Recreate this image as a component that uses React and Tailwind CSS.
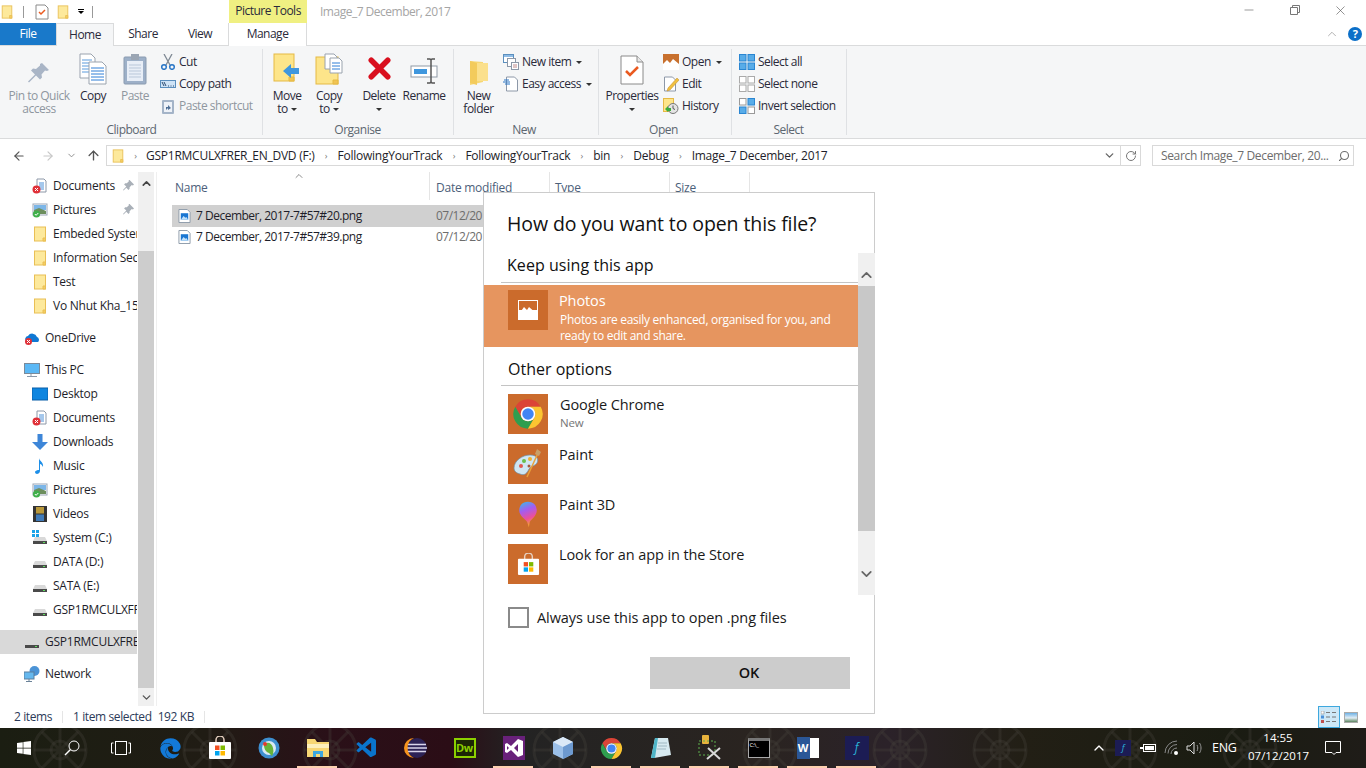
import { ArrowLeft, ArrowRight, ArrowUp, ChevronDown, ChevronUp, RotateCw, Search, Minus, X } from "lucide-react";
import { FaWindows, FaEdge } from "react-icons/fa";
import { VscVscode } from "react-icons/vsc";

function Folder({ className = "w-4 h-4" }) {
  return (
    <svg viewBox="0 0 16 16" className={className}>
      <rect x="2.500" y="1" width="11" height="14" fill="#fde99c" stroke="#e9bf55" />
      <path d="M11 15v-3h2.500v3z" fill="#f6cf62" stroke="#e9bf55" />
    </svg>
  );
}

function Drive() {
  return (
    <svg viewBox="0 0 16 16" className="w-4 h-4">
      <path d="M3 7h10l2 4H1z" fill="#d9d9d9" />
      <rect x="1" y="11" width="14" height="3" fill="#4a4a4a" />
      <rect x="11" y="12" width="2" height="1" fill="#5dde5d" />
    </svg>
  );
}

function Doc() {
  return (
    <svg viewBox="0 0 16 16" className="w-4 h-4">
      <path d="M5 1h7l2 2v11H5z" fill="#fff" stroke="#8d98a8" />
      <path d="M7 5h5M7 7h5M7 9h5M7 11h5" stroke="#4a90d9" />
      <circle cx="4.500" cy="11.500" r="4" fill="#e03038" />
      <path d="M3 10l3 3M6 10l-3 3" stroke="#fff" />
    </svg>
  );
}

function Pic() {
  return (
    <svg viewBox="0 0 16 16" className="w-4 h-4">
      <rect x="1" y="2" width="14" height="11" fill="#fff" stroke="#9aa5b5" />
      <rect x="2" y="3" width="12" height="5" fill="#7cb6e8" />
      <path d="M2 8l5-2 7 3v3H2z" fill="#6d8f5e" />
      <circle cx="4.500" cy="12" r="3.600" fill="#3fb04a" />
      <path d="M2.800 12l1.300 1.300L6.300 11" stroke="#fff" fill="none" />
    </svg>
  );
}

function Monitor({ className = "w-4 h-4" }) {
  return (
    <svg viewBox="0 0 16 16" className={className}>
      <rect x="0.500" y="1.500" width="15" height="10" fill="#5bb8f5" stroke="#7a8a9a" />
      <path d="M7 12v2M3 14.500h10" stroke="#8a98a8" />
    </svg>
  );
}

function NavItem({ icon, label, selected, deep = true }) {
  return (
    <div className={`h-6 flex items-center whitespace-nowrap overflow-hidden ${deep ? "pl-[32px]" : "pl-[24px]"} ${selected ? "bg-[#d9d9d9]" : ""}`}>
      <span className="w-4 h-4 mr-[5px] shrink-0">{icon}</span>
      <span>{label}</span>
    </div>
  );
}

function Pin() {
  return (
    <svg viewBox="0 0 10 10" className="w-[11px] h-[11px] absolute left-[123px] top-[6px]">
      <path d="M6 0l4 4-1 1-1-.5L6 6.500V8L5 9 3 7 .5 9.500 0 9l3-3-2-2 1-1h1.500L5.500 1 5 0z" fill="#a9b0b8" />
    </svg>
  );
}

function PinBig() {
  return (
    <svg viewBox="0 0 24 24" className="w-6 h-6">
      <path d="M15 2l7 7-2 1-2-.5-3.500 4 .5 3-2 2-4-4-7 7-1-1 7-7-4-4 2-2 3 .5 4-3.500L13 3z" fill="#a9b5c6" />
    </svg>
  );
}

function CopyBig() {
  return (
    <svg viewBox="0 0 28 32" className="w-7 h-8">
      <path d="M1 1h11l4 4v20H1z" fill="#fff" stroke="#9aa3ae" />
      <path d="M3 7h10M3 10h10M3 13h10M3 16h10M3 19h10" stroke="#5a9bdc" />
      <path d="M10 9h13l4 4v18H10z" fill="#fff" stroke="#9aa3ae" />
      <path d="M12 15h13M12 18h13M12 21h13M12 24h13M12 27h13" stroke="#2f7fd6" />
    </svg>
  );
}

function PasteBig() {
  return (
    <svg viewBox="0 0 24 32" className="w-6 h-8">
      <rect x="1" y="4" width="22" height="27" rx="1" fill="#9db0c8" stroke="#8a9bb0" />
      <rect x="4" y="8" width="16" height="20" fill="#e8eef7" />
      <path d="M6 12h12M6 15h12M6 18h12M6 21h12M6 24h12" stroke="#b9c7d9" />
      <rect x="8" y="1" width="8" height="6" fill="#9aa5b3" />
    </svg>
  );
}

function MoveBig() {
  return (
    <svg viewBox="0 0 28 32" className="w-7 h-8">
      <rect x="1" y="1" width="20" height="27" fill="#fde58a" stroke="#e5b945" />
      <path d="M16 28v-4h5v4z" fill="#f1c453" stroke="#e5b945" />
      <path d="M26 15H18v-4l-8 7 8 7v-4h8z" fill="#3f97de" />
    </svg>
  );
}

function CopyToBig() {
  return (
    <svg viewBox="0 0 28 32" className="w-7 h-8">
      <rect x="1" y="4" width="22" height="27" fill="#fde58a" stroke="#e5b945" />
      <path d="M18 31v-4h5v4z" fill="#f1c453" stroke="#e5b945" />
      <path d="M10 1h9l3 3v12H10z" fill="#fff" stroke="#9aa3ae" />
      <path d="M15 5h9l3 3v12H15z" fill="#fff" stroke="#9aa3ae" />
      <path d="M17 10h8M17 13h8M17 16h8" stroke="#2f7fd6" />
    </svg>
  );
}

function RenameBig() {
  return (
    <svg viewBox="0 0 28 28" className="w-7 h-7">
      <rect x="1" y="9" width="26" height="11" fill="#fff" stroke="#8f99a6" />
      <rect x="4" y="12" width="13" height="5" fill="#3f97de" />
      <path d="M17 2h3l1 1 1-1h3M21 3v22M17 26h3l1-1 1 1h3" stroke="#555" strokeWidth="1.500" fill="none" />
    </svg>
  );
}

function PropsBig() {
  return (
    <svg viewBox="0 0 24 30" className="w-6 h-[30px]">
      <path d="M1 1h16l6 6v22H1z" fill="#fff" stroke="#8a8a8a" />
      <path d="M17 1v6h6" fill="#e8e8e8" stroke="#8a8a8a" />
      <path d="M6 16l4 4 8-8" fill="none" stroke="#ea5a20" strokeWidth="2.500" />
    </svg>
  );
}

function NewFolderBig() {
  return (
    <svg viewBox="0 0 20 24" className="w-5 h-6">
      <path d="M1 0l13 1v20l-13 3z" fill="#f7d774" />
      <path d="M5 2h14v18H5z" fill="#fbe08c" />
      <path d="M1 0l7 2v22l-7-2z" fill="#f3cb5c" />
    </svg>
  );
}

function Small({ name }) {
  const common = { viewBox: "0 0 16 16", className: "w-4 h-4" };
  if (name === "cut")
    return (
      <svg {...common}>
        <path d="M4 0l6 11M12 0L6 11" stroke="#7f8994" strokeWidth="1.300" />
        <circle cx="4" cy="13" r="2.300" fill="none" stroke="#2a76c6" strokeWidth="1.500" />
        <circle cx="12" cy="13" r="2.300" fill="none" stroke="#2a76c6" strokeWidth="1.500" />
      </svg>
    );
  if (name === "path")
    return (
      <svg {...common}>
        <rect x="0.500" y="4.500" width="15" height="7" fill="#cfe4f7" stroke="#5b8fbe" />
        <path d="M2 6l2 4M4 6l2 4M8 10h1M10.500 10h1M13 10h1" stroke="#2b4b70" />
      </svg>
    );
  if (name === "shortcut")
    return (
      <svg {...common}>
        <rect x="2" y="2" width="12" height="14" rx="1" fill="#a4b4c8" />
        <rect x="4" y="4" width="8" height="10" fill="#eef2f8" />
        <path d="M6 12V9h2V7l3 3-3 2v-2" fill="#4f6f96" />
      </svg>
    );
  if (name === "newitem")
    return (
      <svg {...common}>
        <rect x="0.500" y="0.500" width="10" height="8" fill="#fff" stroke="#5b8fbe" />
        <rect x="1" y="1" width="9" height="2" fill="#8fbce6" />
        <rect x="4.500" y="4.500" width="8" height="8" fill="#fff" stroke="#8d98a8" />
        <rect x="8.500" y="8.500" width="7" height="7" fill="#fff" stroke="#8d98a8" />
        <path d="M10 11h4M10 13h4" stroke="#c08a8a" />
      </svg>
    );
  if (name === "easy")
    return (
      <svg {...common}>
        <path d="M3.500 1h8l3 3v11h-11z" fill="#fff" stroke="#8d98a8" />
        <path d="M1 4h5M0 6h7M2 8h5" stroke="#2a76c6" />
      </svg>
    );
  if (name === "open")
    return (
      <svg {...common}>
        <rect width="16" height="16" fill="#c8702e" />
        <path d="M0 16V10l4-4 3 3 3-4 6 5v6z" fill="#fff" />
      </svg>
    );
  if (name === "edit")
    return (
      <svg {...common}>
        <path d="M1.500 1h8l3 3v11h-11z" fill="#fff" stroke="#8d98a8" />
        <path d="M14 2l2 2-9 10-3 1 1-3z" fill="#f0c040" stroke="#c08a2a" strokeWidth="0.500" />
      </svg>
    );
  if (name === "history")
    return (
      <svg {...common}>
        <rect x="0.500" y="0.500" width="10" height="13" fill="#fde58a" stroke="#e5b945" />
        <circle cx="10" cy="10.500" r="5" fill="#e4e4e4" stroke="#777" />
        <path d="M10 7.500v3l2 1" stroke="#555" fill="none" />
        <path d="M2 11l3-3v2h3v3H5v1z" fill="#3cab3c" />
      </svg>
    );
  const on = "#58ace8";
  const off = "#fff";
  const cells = {
    all: [on, on, on, on],
    none: [off, off, off, off],
    invert: [off, on, on, off],
  }[name];
  const line = { all: "#2a86d2", none: "#aaa", invert: "#999" }[name];
  return (
    <svg {...common}>
      <rect x="0.500" y="0.500" width="6.500" height="6.500" fill={cells[0]} stroke={line} />
      <rect x="9" y="0.500" width="6.500" height="6.500" fill={cells[1]} stroke={cells[1] === on ? "#2a86d2" : line} />
      <rect x="0.500" y="9" width="6.500" height="6.500" fill={cells[2]} stroke={cells[2] === on ? "#2a86d2" : line} />
      <rect x="9" y="9" width="6.500" height="6.500" fill={cells[3]} stroke={line} />
    </svg>
  );
}

function Caret({ className = "" }) {
  return <span className={`inline-block w-0 h-0 border-x-[3px] border-x-transparent border-t-[3px] border-t-[#333] ${className}`} />;
}

function BigBtn({ icon, lines, caret, w, muted, ml }) {
  return (
    <div className={`${w} ${ml || ""} flex flex-col items-center shrink-0 ${muted ? "text-[#8f979f]" : "text-[#2a2a3a]"}`}>
      <div className="h-[34px] mb-[4px] flex items-end justify-center">{icon}</div>
      {lines.map((l, i) => (
        <div key={i} className="h-[13px] leading-[13px] whitespace-nowrap">
          {l}
          {caret && lines.length > 1 && i === lines.length - 1 && <Caret className="ml-[3px] mb-[2px]" />}
        </div>
      ))}
      {caret && lines.length === 1 && <div className="h-[13px] leading-[13px]"><Caret className="mb-[2px]" /></div>}
    </div>
  );
}

function SmallBtn({ icon, label, caret, muted }) {
  return (
    <div className={`h-[22px] flex items-center whitespace-nowrap ${muted ? "text-[#8f979f]" : "text-[#2a2a3a]"}`}>
      <span className="w-4 h-4 mr-[3px]">{icon}</span>
      {label}
      {caret && <Caret className="ml-[5px]" />}
    </div>
  );
}

function Group({ w, label, children, labelPad = "" }) {
  return (
    <div className={`${w} shrink-0 relative flex flex-col`}>
      <div className="flex h-[70px] pt-[5px]">{children}</div>
      <div className={`h-[16px] leading-[16px] text-center text-[#5c6670] mt-[6px] ${labelPad}`}>{label}</div>
      <div className="absolute right-0 top-[3px] bottom-[3px] w-px bg-[#dfe1e4]" />
    </div>
  );
}

function ChromeIcon({ className = "w-8 h-8" }) {
  return (
    <svg viewBox="0 0 24 24" className={className}>
      <path d="M12 1A11 11 0 0 1 21.530 6.500H12A5.500 5.500 0 0 0 7.240 14.750L2.470 6.500A11 11 0 0 1 12 1Z" fill="#db4437" />
      <path d="M2.470 6.500L7.240 14.750A5.500 5.500 0 0 0 16.760 14.750L12 23A11 11 0 0 1 2.470 6.500Z" fill="#2f9e4f" />
      <path d="M21.530 6.500H12A5.500 5.500 0 0 1 16.760 14.750L12 23A11 11 0 0 0 21.530 6.500Z" fill="#fbc531" />
      <circle cx="12" cy="12" r="5.500" fill="#fff" />
      <circle cx="12" cy="12" r="4.300" fill="#4285f4" />
    </svg>
  );
}

function StoreIcon({ className = "w-7 h-7" }) {
  return (
    <svg viewBox="0 0 24 24" className={className}>
      <path d="M8 7V4a4 4 0 0 1 8 0v3" fill="none" stroke="#e6d0c0" strokeWidth="1.500" />
      <rect x="1" y="6" width="22" height="17" rx="1" fill="#fff" />
      <rect x="7" y="9.500" width="4.500" height="4.500" fill="#f25022" />
      <rect x="12.500" y="9.500" width="4.500" height="4.500" fill="#7fba00" />
      <rect x="7" y="15" width="4.500" height="4.500" fill="#00a4ef" />
      <rect x="12.500" y="15" width="4.500" height="4.500" fill="#ffb900" />
    </svg>
  );
}

function AppRow({ icon, name, sub }) {
  return (
    <div className="h-[40px] mb-[10px] pl-[24px] flex">
      <div className="w-10 h-10 bg-[#cb6b2c] flex items-center justify-center shrink-0">{icon}</div>
      <div className={`${sub ? "ml-[12px]" : "ml-[11px]"} text-[14.500px] tracking-[-0.1px] leading-[20px] text-[#1a1a1a] pt-[1px]`}>
        <div>{name}</div>
        {sub && <div className="text-[11.500px] tracking-[-0.2px] leading-[16px] text-[#767676]">{sub}</div>}
      </div>
    </div>
  );
}

function Dialog() {
  return (
    <div className="absolute left-[483px] top-[192px] w-[392px] h-[522px] bg-white border border-[#cccccc] flex flex-col tracking-[-0.1px]">
      <div className="h-[60px] pl-[23px] pt-[18px] text-[19.500px] leading-[26px] text-[#111] shrink-0">How do you want to open this file?</div>
      <div className="h-[342px] flex shrink-0">
        <div className="w-[374px] shrink-0">
          <div className="h-[30px] ml-[17px] pl-[6px] text-[16px] tracking-[0.05px] leading-[24px] text-[#111] border-b border-[#c4c4c4]">Keep using this app</div>
          <div className="h-[62px] mt-[2px] bg-[#e6955f] pl-[24px] pt-[5px] flex">
            <div className="w-10 h-10 bg-[#cb6b2c] flex items-center justify-center shrink-0">
              <svg viewBox="0 0 20 20" className="w-5 h-5">
                <rect width="20" height="20" fill="#fff" />
                <rect x="1" y="1" width="18" height="9" fill="#cb6b2c" />
                <path d="M1 14l5-7 3 3 2-3 8 7v1H1z" fill="#fff" />
              </svg>
            </div>
            <div className="ml-[11px] text-white">
              <div className="text-[14.500px] leading-[18px] mt-[2px]">Photos</div>
              <div className="text-[12px] tracking-[-0.3px] leading-[16px] ml-[1px] mt-[2px]">Photos are easily enhanced, organised for you, and<br />ready to edit and share.</div>
            </div>
          </div>
          <div className="h-[39px] ml-[17px] pl-[7px] pt-[10px] text-[16px] tracking-[0px] leading-[24px] text-[#111] border-b border-[#c4c4c4]">Other options</div>
          <div className="pt-[8px]">
            <AppRow icon={<ChromeIcon className="w-8 h-8" />} name="Google Chrome" sub="New" />
            <AppRow
              name="Paint"
              icon={
                <svg viewBox="0 0 32 32" className="w-8 h-8">
                  <path d="M2 20c0-7 8-13 16-13 7 0 9 4 7 8-2 3-6 3-8 6-2 4-4 7-9 5-4-1-6-3-6-6z" fill="#cfe6f3" stroke="#6b91a8" strokeWidth="0.700" />
                  <circle cx="9" cy="18" r="2" fill="#e0574f" />
                  <circle cx="12" cy="13" r="2" fill="#6abf4b" />
                  <circle cx="18" cy="11" r="2" fill="#f0b232" />
                  <circle cx="17" cy="18" r="1.500" fill="#a5573d" />
                  <path d="M27 3L15 29" stroke="#e8a23c" strokeWidth="1.500" />
                  <path d="M25 1l4 3-2 4-4-2z" fill="#c8a06a" />
                </svg>
              }
            />
            <AppRow
              name="Paint 3D"
              icon={
                <svg viewBox="0 0 32 32" className="w-7 h-7">
                  <defs>
                    <linearGradient id="p3d" x1="0" y1="0" x2="0.300" y2="1">
                      <stop offset="0" stopColor="#2fc3e8" />
                      <stop offset="0.400" stopColor="#a45cf0" />
                      <stop offset="0.750" stopColor="#ee4f9a" />
                      <stop offset="1" stopColor="#f2a03a" />
                    </linearGradient>
                  </defs>
                  <path d="M16 2c7 0 10 5 10 10 0 6-6 10-8 13l-1 6-2-6C13 22 6 18 6 12 6 7 9 2 16 2z" fill="url(#p3d)" />
                </svg>
              }
            />
            <AppRow name="Look for an app in the Store" icon={<StoreIcon className="w-[23px] h-[23px]" />} />
          </div>
        </div>
        <div className="w-[17px] flex flex-col shrink-0 bg-[#f0f0f0]">
          <div className="h-[33px] flex items-center justify-center pt-[11px] text-[#666]"><ChevronUp size={18} strokeWidth={2.500} /></div>
          <div className="h-[245px] bg-[#c8c8c8]" />
          <div className="flex-1 flex items-end justify-center pb-[12px] text-[#666]"><ChevronDown size={18} strokeWidth={2.500} /></div>
        </div>
      </div>
      <div className="pl-[24px] pt-[12px] flex items-center text-[14.500px] tracking-[-0.07px] text-[#1a1a1a]">
        <div className="w-[21px] h-[21px] border-2 border-[#8a8a8a] mr-[8px]" />
        Always use this app to open .png files
      </div>
      <div className="ml-[166px] mt-[28px] w-[200px] h-[32px] bg-[#cccccc] flex items-center justify-center pr-[2px] text-[14.500px] font-semibold text-[#111]">OK</div>
    </div>
  );
}

function Task({ children, running, w = "w-[49px]" }) {
  return (
    <div className={`relative ${w} h-full flex items-center justify-center shrink-0`}>
      {children}
      {running && <div className="absolute bottom-0 left-[4px] w-[40px] h-[2px] bg-[#fdd0b0]" />}
    </div>
  );
}

function Wallpaper() {
  // faint flower pattern of the desktop picture behind the taskbar
  const spots = [60, 210, 330, 560, 770, 900, 1000, 1130, 1250];
  return (
    <svg viewBox="0 0 1366 40" className="absolute inset-0 w-full h-full" fill="none">
      {spots.map((x) => (
        <g key={x} stroke="#4a4640" strokeOpacity="0.300" strokeWidth="3">
          <circle cx={x} cy="22" r="26" />
          <circle cx={x} cy="22" r="9" />
          <path d={`M${x - 26} 22H${x + 26}M${x} -4V48M${x - 18} 4L${x + 18} 40M${x + 18} 4L${x - 18} 40`} />
        </g>
      ))}
    </svg>
  );
}

function Taskbar() {
  return (
    <div className="relative h-[40px] shrink-0 flex text-white overflow-hidden bg-[linear-gradient(90deg,#1b1e12_0%,#201c14_15%,#2a1018_24%,#2b0d16_33%,#232323_38%,#2a2420_55%,#2b2229_65%,#221f15_75%,#1a1c12_90%,#1f1c18_100%)]">
      <Wallpaper />
      <Task w="w-[48px]"><FaWindows size={16} /></Task>
      <Task w="w-[47px]">
        <svg viewBox="0 0 16 16" className="w-4 h-4" fill="none" stroke="#fff">
          <circle cx="10" cy="6" r="5" />
          <path d="M6.500 9.500L1 15" strokeWidth="1.500" />
        </svg>
      </Task>
      <Task w="w-[51px]">
        <svg viewBox="0 0 20 14" className="w-5 h-[14px]" fill="none" stroke="#fff">
          <rect x="4.500" y="0.500" width="11" height="13" />
          <path d="M2.500 2H.5v10h2M17.500 2h2v10h-2" />
        </svg>
      </Task>
      <Task><FaEdge size={21} color="#1379d8" /></Task>
      <Task><StoreIcon className="w-6 h-6" /></Task>
      <Task>
        <svg viewBox="0 0 22 22" className="w-[22px] h-[22px]">
          <circle cx="11" cy="11" r="10.500" fill="#3d8fd0" />
          <circle cx="11" cy="11" r="7" fill="#d9e9f2" />
          <path d="M6 8c3-4 8-2 9 3 1 4 0 6-1 8l-3-3C8 15 6 12 6 8z" fill="#66b43a" />
          <circle cx="7" cy="7" r="2" fill="#e23a2e" />
        </svg>
      </Task>
      <Task running>
        <svg viewBox="0 0 22 20" className="w-[22px] h-5">
          <path d="M0 1h8l2 3h12v15H0z" fill="#f7d774" />
          <rect x="0" y="6" width="22" height="4" fill="#fdf0bc" />
          <path d="M6 19v-6h10v6h-3v-3H9v3z" fill="#3ea7e0" />
        </svg>
      </Task>
      <Task><VscVscode size={24} color="#0a74cc" /></Task>
      <Task>
        <svg viewBox="0 0 24 24" className="w-6 h-6">
          <circle cx="13" cy="12" r="10" fill="#2c2255" />
          <path d="M3 12h20M4 8.500h18M4 15.500h18" stroke="#d9d5ea" strokeWidth="1.500" />
          <path d="M10 2A10 10 0 0 0 10 22 11 11 0 0 1 10 2z" fill="#f7941e" />
        </svg>
      </Task>
      <Task>
        <div className="w-[22px] h-[20px] border-2 border-[#8cd000] bg-[#1c2605] text-[#8cd000] text-[11px] leading-[16px] font-bold text-center">Dw</div>
      </Task>
      <Task running>
        <svg viewBox="0 0 22 24" className="w-[22px] h-6">
          <path d="M0 0h22v24H0z" fill="#68217a" />
          <path d="M15 3l5 2v14l-5 2-7-7-4 3-2-1V8l2-1 4 3zM15 8l-4 4 4 4zM4 10v4l2-2z" fill="#fff" />
        </svg>
      </Task>
      <Task>
        <svg viewBox="0 0 22 24" className="w-[22px] h-6">
          <path d="M11 1l10 5v12l-10 5-10-5V6z" fill="#9cc0e8" />
          <path d="M11 1l10 5-10 5L1 6z" fill="#dbe9f7" />
          <path d="M11 11l10-5v12l-10 5z" fill="#6d9ad0" />
        </svg>
      </Task>
      <Task running><ChromeIcon className="w-[23px] h-[23px]" /></Task>
      <Task running>
        <svg viewBox="0 0 22 22" className="w-[22px] h-[22px]">
          <path d="M5 1h13l3 17-17 3H1z" fill="#d7eaf0" />
          <path d="M5 1L1 21h4l3-20z" fill="#4fb5c7" />
          <path d="M8 6h9M8 9h9M7 12h9" stroke="#9fb8c2" />
        </svg>
      </Task>
      <Task running>
        <svg viewBox="0 0 24 26" className="w-6 h-[26px]">
          <rect x="4" y="0" width="7" height="9" rx="1" fill="#e8b33c" />
          <rect x="1" y="6" width="16" height="14" fill="none" stroke="#5fb04f" strokeDasharray="2 2" />
          <path d="M9 24l13-11M10 13l12 11" stroke="#d8d8d8" strokeWidth="2" />
        </svg>
      </Task>
      <Task running>
        <div className="w-[22px] h-[20px] bg-black border border-[#aaa] text-[6px] leading-[9px] pl-[1px] border-t-[3px] border-t-[#777]">C:\_</div>
      </Task>
      <Task running>
        <div className="relative w-[22px] h-[22px]">
          <div className="absolute right-0 top-[1px] w-[16px] h-[20px] bg-white" />
          <div className="absolute left-0 top-0 w-[13px] h-[22px] bg-[#2b5797] text-white text-[11px] font-bold leading-[22px] text-center">W</div>
        </div>
      </Task>
      <Task running>
        <div className="w-6 h-6 bg-[#1c1c54] text-[#2ab3d8] text-[12px] italic leading-[24px] text-center">f</div>
      </Task>

      <div className="relative ml-auto flex items-center">
        <ChevronUp size={16} className="mr-[8px]" />
        <div className="w-4 h-4 bg-[#1c1c54] text-[#2ab3d8] text-[9px] italic leading-[16px] text-center mr-[9px]">f</div>
        <svg viewBox="0 0 16 10" className="w-4 h-[10px] mr-[8px]">
          <rect x="3.500" y="1.500" width="12" height="7" fill="none" stroke="#fff" />
          <rect x="5" y="3" width="9" height="4" fill="#fff" />
          <path d="M0 5h3" stroke="#fff" strokeWidth="2" />
        </svg>
        <svg viewBox="0 0 16 16" className="w-4 h-4 mr-[6px]" fill="none" stroke="#8a8a8a">
          <path d="M1 13a12 12 0 0 1 12-12M4 13.500a9 9 0 0 1 9-9M7 14a6 6 0 0 1 6-6" />
          <circle cx="12" cy="13" r="2" fill="#fff" stroke="none" />
        </svg>
        <svg viewBox="0 0 16 16" className="w-4 h-4 mr-[10px]" fill="none" stroke="#ddd">
          <path d="M1 6h3l4-4v12l-4-4H1z" />
          <path d="M11 5c1 2 1 4 0 6M13.500 3c2 3 2 7 0 10" stroke="#999" />
        </svg>
        <div className="text-[12.500px] w-[25px] mr-[11px]">ENG</div>
        <div className="w-[60px] text-center text-[11.500px] tracking-normal leading-[18px] -mt-[2px] mr-[17px]">
          <div>14:55</div>
          <div>07/12/2017</div>
        </div>
        <svg viewBox="0 0 16 16" className="w-4 h-4 mr-[25px]" fill="none" stroke="#fff">
          <path d="M.5 1.500h15v11H11L9 14.500l-2-2H.5z" />
        </svg>
      </div>
    </div>
  );
}

export default function App() {
  return (
    <div className="relative w-[1366px] h-[768px] overflow-hidden bg-white flex flex-col text-[12px] tracking-[-0.25px] text-[#1e1e2a] font-['Open_Sans','Noto_Sans',sans-serif]">
      {/* title bar */}
      <div className="h-[23px] flex shrink-0 tracking-[-0.5px]">
        <div className="w-[229px] flex items-center">
          <Folder className="w-[14px] h-4" />
          <div className="w-px h-[12px] bg-[#999] ml-[9px]" />
          <svg viewBox="0 0 14 16" className="w-[14px] h-4 ml-[11px]">
            <path d="M1 1h9l3 3v11H1z" fill="#fff" stroke="#8a8a8a" />
            <path d="M4 8l2 2 4-4" fill="none" stroke="#ea5a20" strokeWidth="1.500" />
          </svg>
          <Folder className="w-[14px] h-4 ml-[7px]" />
          <div className="ml-[8px] flex flex-col items-center">
            <div className="w-[6px] h-px bg-black mb-[1px]" />
            <Caret className="border-t-black" />
          </div>
          <div className="w-px h-[12px] bg-[#999] ml-[8px]" />
        </div>
        <div className="w-[78px] bg-[#f0f082] text-center leading-[21px] text-[#2a2a3a]">Picture Tools</div>
        <div className="ml-[13px] leading-[24px] text-[#a5a5a5]">Image_7 December, 2017</div>
        <div className="ml-auto flex items-start text-[#555]">
          <Minus size={14} strokeWidth={1} className="mt-[3px] mr-[34px]" />
          <svg viewBox="0 0 10 10" className="w-[10px] h-[10px] mt-[5px] mr-[33px]" fill="none" stroke="#777">
            <path d="M.5 2.500h7v7h-7zM2.500 2.500v-2h7v7h-2" />
          </svg>
          <X size={15} strokeWidth={1} className="mt-[3px] mr-[18px]" />
        </div>
      </div>
      {/* tabs */}
      <div className="h-[23px] flex shrink-0 items-stretch border-b border-[#dadbdc] leading-[22px] text-[#2a2a3a] tracking-[-0.5px]">
        <div className="w-[56px] bg-[#1979ca] text-white text-center">File</div>
        <div className="w-[58px] h-[23px] bg-[#f5f6f7] border-x border-t border-[#dadbdc] text-center">Home</div>
        <div className="w-[58px] text-center">Share</div>
        <div className="w-[56px] text-center">View</div>
        <div className="w-[79px] h-[23px] border-x border-[#dadbdc] text-center bg-white">Manage</div>
        <div className="ml-auto flex items-center">
          <ChevronUp size={14} strokeWidth={1.300} className="text-[#999] mr-[9px]" />
          <div className="w-[14px] h-[14px] rounded-full bg-[#0b6fc8] text-white text-[11px] leading-[14px] font-bold text-center mr-[4px]">?</div>
        </div>
      </div>
      {/* ribbon */}
      <div className="h-[93px] bg-[#f5f6f7] border-b border-[#dadbdc] flex shrink-0 text-[#2a2a3a] tracking-[-0.5px]">
        <Group w="w-[263px]" label="Clipboard">
          <div className="w-[6px]" />
          <BigBtn w="w-[66px]" muted icon={<PinBig />} lines={["Pin to Quick", "access"]} />
          <BigBtn w="w-[42px]" icon={<CopyBig />} lines={["Copy"]} />
          <BigBtn w="w-[42px]" muted icon={<PasteBig />} lines={["Paste"]} />
          <div className="ml-[4px]">
            <SmallBtn icon={<Small name="cut" />} label="Cut" />
            <SmallBtn icon={<Small name="path" />} label="Copy path" />
            <SmallBtn muted icon={<Small name="shortcut" />} label="Paste shortcut" />
          </div>
        </Group>
        <Group w="w-[191px]" label="Organise" labelPad="pr-[2px]">
          <BigBtn w="w-[48px]" icon={<MoveBig />} lines={["Move", "to"]} caret />
          <BigBtn w="w-[36px]" icon={<CopyToBig />} lines={["Copy", "to"]} caret />
          <BigBtn w="w-[48px]" ml="ml-[8px]" icon={<X size={33} strokeWidth={4} color="#d90f1e" />} lines={["Delete"]} caret />
          <BigBtn w="w-[42px]" icon={<RenameBig />} lines={["Rename"]} />
        </Group>
        <Group w="w-[145px]" label="New" labelPad="pr-[5px]">
          <BigBtn w="w-[49px]" icon={<NewFolderBig />} lines={["New", "folder"]} />
          <div>
            <SmallBtn icon={<Small name="newitem" />} label="New item" caret />
            <SmallBtn icon={<Small name="easy" />} label="Easy access" caret />
          </div>
        </Group>
        <Group w="w-[133px]" label="Open" labelPad="pr-[4px]">
          <div className="w-[6px]" />
          <BigBtn w="w-[54px]" icon={<PropsBig />} lines={["Properties"]} caret />
          <div className="ml-[4px]">
            <SmallBtn icon={<Small name="open" />} label="Open" caret />
            <SmallBtn icon={<Small name="edit" />} label="Edit" />
            <SmallBtn icon={<Small name="history" />} label="History" />
          </div>
        </Group>
        <Group w="w-[115px]" label="Select" labelPad="pr-[2px]">
          <div className="ml-[7px]">
            <SmallBtn icon={<Small name="all" />} label="Select all" />
            <SmallBtn icon={<Small name="none" />} label="Select none" />
            <SmallBtn icon={<Small name="invert" />} label="Invert selection" />
          </div>
        </Group>
      </div>
      {/* address bar */}
      <div className="h-[33px] flex items-center shrink-0">
        <ArrowLeft size={14} className="ml-[12px] text-[#555]" />
        <ArrowRight size={14} className="ml-[15px] text-[#c8c8c8]" />
        <ChevronDown size={11} className="ml-[11px] text-[#888]" />
        <ArrowUp size={15} strokeWidth={2.200} className="ml-[9px] text-[#555]" />
        <div className="ml-[5px] w-[1035px] h-[21px] border border-[#d9d9d9] flex items-center whitespace-nowrap text-[#1e1e2a]">
          <Folder className="w-[14px] h-4 ml-[4px]" />
          {["GSP1RMCULXFRER_EN_DVD (F:)", "FollowingYourTrack", "FollowingYourTrack", "bin", "Debug", "Image_7 December, 2017"].map((p, i) => (
            <span key={i} className="flex items-center">
              <span className={`text-[#777] text-[9px] text-center ${i === 0 ? "w-[21px]" : "w-[23px]"}`}>&#x203A;</span>
              {p}
            </span>
          ))}
          <ChevronDown size={13} strokeWidth={2.500} className="ml-auto mr-[4px] text-[#666]" />
          <div className="w-[20px] h-full border-l border-[#d9d9d9] flex items-center justify-center text-[#777]">
            <RotateCw size={12} strokeWidth={2} />
          </div>
        </div>
        <div className="ml-[11px] w-[202px] h-[21px] border border-[#d9d9d9] flex items-center pl-[8px] tracking-[-0.35px] text-[#6d6d6d] whitespace-nowrap">
          Search Image_7 December, 20...
          <Search size={12} strokeWidth={2.200} className="ml-auto mr-[3px] -scale-x-100" />
        </div>
      </div>
      {/* main */}
      <div className="flex-1 min-h-0 flex">
        <div className="w-[137px] shrink-0 overflow-hidden pt-[2px]">
          <div className="relative">
            <NavItem icon={<Doc />} label="Documents" />
            <Pin />
          </div>
          <div className="relative">
            <NavItem icon={<Pic />} label="Pictures" />
            <Pin />
          </div>
          <NavItem icon={<Folder />} label="Embeded Systems" />
          <NavItem icon={<Folder />} label="Information Security" />
          <NavItem icon={<Folder />} label="Test" />
          <NavItem icon={<Folder />} label="Vo Nhut Kha_15520372" />
          <div className="h-2" />
          <NavItem
            deep={false}
            label="OneDrive"
            icon={
              <svg viewBox="0 0 16 16" className="w-4 h-4">
                <path d="M2 11a3 3 0 0 1 2-5 5 5 0 0 1 9 1 3 3 0 0 1 1 5H3z" fill="#0f78d4" />
                <circle cx="4.500" cy="11.500" r="3.500" fill="#e03038" />
                <path d="M3 10l3 3M6 10l-3 3" stroke="#fff" />
              </svg>
            }
          />
          <div className="h-2" />
          <NavItem deep={false} icon={<Monitor />} label="This PC" />
          <NavItem
            label="Desktop"
            icon={
              <svg viewBox="0 0 16 16" className="w-4 h-4">
                <rect y="2" width="16" height="12" fill="#0f86e0" stroke="#0a5ea8" />
              </svg>
            }
          />
          <NavItem icon={<Doc />} label="Documents" />
          <NavItem
            label="Downloads"
            icon={
              <svg viewBox="0 0 16 16" className="w-4 h-4">
                <path d="M5.500 0h5v8H16l-8 8-8-8h5.500z" fill="#3d86d8" />
              </svg>
            }
          />
          <NavItem
            label="Music"
            icon={
              <svg viewBox="0 0 16 16" className="w-4 h-4">
                <path d="M7 0c0 3 5 4 4 9-1-2-2-3-3-3v7c0 2-2 3-3 3s-2-1-2-2 2-2 3-2h1z" fill="#1e8fe8" />
              </svg>
            }
          />
          <NavItem icon={<Pic />} label="Pictures" />
          <NavItem
            label="Videos"
            icon={
              <svg viewBox="0 0 16 16" className="w-4 h-4">
                <rect x="1" width="14" height="16" fill="#333" />
                <rect x="4" y="1" width="8" height="6.500" fill="#b9983a" />
                <rect x="4" y="8.500" width="8" height="6.500" fill="#3f7ab8" />
              </svg>
            }
          />
          <NavItem
            label="System (C:)"
            icon={
              <div className="relative w-4 h-4">
                <Drive />
                <div className="absolute left-0 top-0 grid grid-cols-2 gap-px">
                  <div className="w-[3px] h-[3px] bg-[#19a3e8]" />
                  <div className="w-[3px] h-[3px] bg-[#19a3e8]" />
                  <div className="w-[3px] h-[3px] bg-[#19a3e8]" />
                  <div className="w-[3px] h-[3px] bg-[#19a3e8]" />
                </div>
              </div>
            }
          />
          <NavItem icon={<Drive />} label="DATA (D:)" />
          <NavItem icon={<Drive />} label="SATA (E:)" />
          <NavItem icon={<Drive />} label="GSP1RMCULXFRER_EN_DVD (F:)" />
          <div className="h-2" />
          <NavItem deep={false} selected icon={<Drive />} label="GSP1RMCULXFRER_EN_DVD (F:)" />
          <div className="h-2" />
          <NavItem
            deep={false}
            label="Network"
            icon={
              <svg viewBox="0 0 16 16" className="w-4 h-4">
                <circle cx="10.500" cy="5" r="5" fill="#4b93d6" />
                <rect x="0" y="6" width="10" height="7" fill="#65b8ee" stroke="#5a7f9e" />
                <path d="M5 13v2M2 15.500h6" stroke="#6b8298" />
              </svg>
            }
          />
        </div>
        <div className="w-[16px] ml-[1px] shrink-0 bg-[#f0f0f0] flex flex-col">
          <div className="h-[79px] pt-[5px] flex justify-center text-[#444]"><ChevronUp size={13} strokeWidth={3} /></div>
          <div className="flex-1 bg-[#cdcdcd]" />
          <div className="h-[18px] flex items-center justify-center text-[#555]"><ChevronDown size={13} strokeWidth={2.500} /></div>
        </div>
        <div className="flex-1 border-l border-[#efefef] ml-[2px]">
          <div className="h-[28px] flex items-stretch text-[#4c607a]">
            <div className="w-[273px] pl-[18px] pt-[7px] border-r border-[#e5e5e5] relative">
              Name
              <ChevronUp size={12} strokeWidth={1.500} className="absolute left-[136px] -top-[2px] text-[#666]" />
            </div>
            <div className="w-[120px] pl-[6px] pt-[7px] border-r border-[#e5e5e5]">Date modified</div>
            <div className="w-[120px] pl-[5px] pt-[7px] border-r border-[#e5e5e5]">Type</div>
            <div className="w-[80px] pl-[5px] pt-[7px] border-r border-[#e5e5e5]">Size</div>
          </div>
          <div className="pt-[5px] pl-[15px] w-[593px] tracking-[-0.5px]">
            {["7 December, 2017-7#57#20.png", "7 December, 2017-7#57#39.png"].map((f, i) => (
              <div key={f} className={`flex items-center pl-[6px] ${i === 0 ? "h-[22px] bg-[#d0d0d0]" : "h-[20px]"}`}>
                <svg viewBox="0 0 14 16" className="w-[13px] h-4">
                  <path d="M1 1h9l3 3v11H1z" fill="#fff" stroke="#8a98a8" />
                  <rect x="3" y="5" width="8" height="7" fill="#1976d2" />
                  <path d="M3 12l3-4 2 2 1-1 2 3z" fill="#bfe0fa" />
                </svg>
                <span className="ml-[5px] w-[240px] whitespace-nowrap">{f}</span>
                <span className="text-[#6d6d6d]">07/12/2017 07:57</span>
              </div>
            ))}
          </div>
        </div>
      </div>
      {/* status bar */}
      <div className="h-[22px] flex items-center shrink-0 text-[#2b3a58] tracking-[-0.4px]">
        <span className="ml-[14px]">2 items</span>
        <span className="ml-[10px] w-px h-[12px] bg-[#e5e5e5]" />
        <span className="ml-[10px]">1 item selected</span>
        <span className="ml-[6px]">192 KB</span>
        <span className="ml-[10px] w-px h-[12px] bg-[#e5e5e5]" />
        <div className="ml-auto flex items-center mr-[8px]">
          <div className="w-[22px] h-[22px] border border-[#3ea8de] bg-[#cde8f7] flex items-center justify-center">
            <svg viewBox="0 0 16 12" className="w-4 h-3">
              <rect x="0" y="0" width="3" height="3" fill="#fff" stroke="#777" strokeWidth="0.500" />
              <rect x="0" y="4.500" width="3" height="3" fill="#4a90d9" />
              <rect x="0" y="9" width="3" height="3" fill="#c0504d" />
              <path d="M5 1.500h4M11 1.500h4M5 6h4M11 6h4M5 10.500h4M11 10.500h4" stroke="#777" />
            </svg>
          </div>
          <div className="ml-[4px] w-[14px] h-[11px] border border-[#aaa] bg-[linear-gradient(#6fb2e6,#e3eef5_55%,#5c8560)]" />
        </div>
      </div>
      <Taskbar />
      <Dialog />
    </div>
  );
}
